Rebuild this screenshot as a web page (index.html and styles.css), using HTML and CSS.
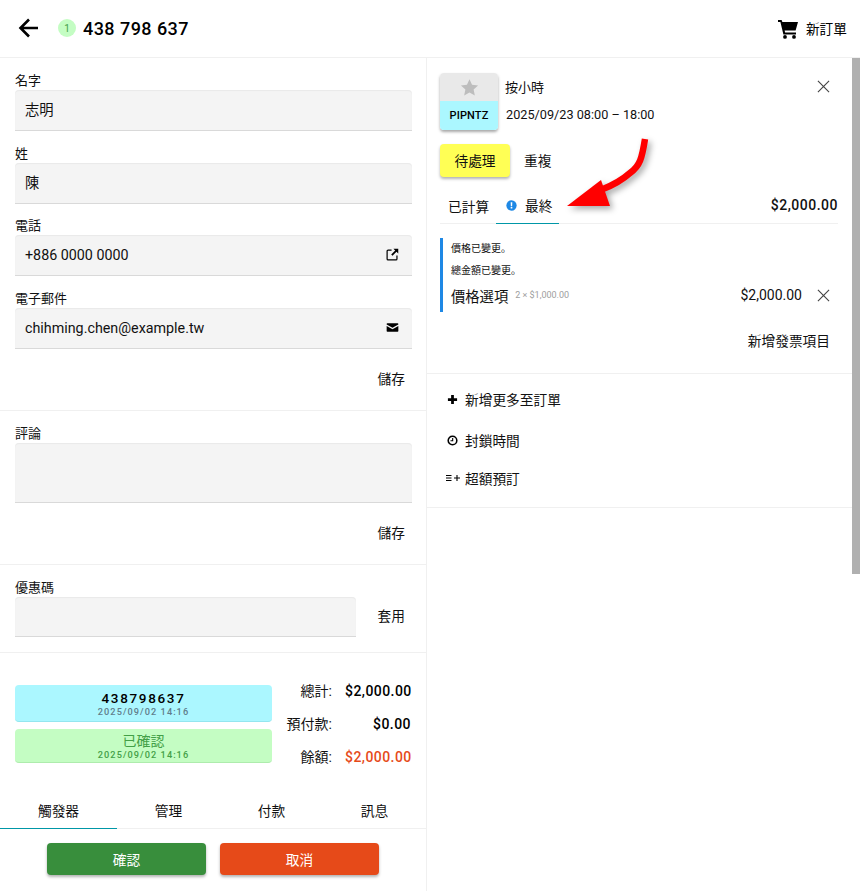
FILE: index.html
```html
<!DOCTYPE html>
<html>
<head>
<meta charset="utf-8">
<title>訂單 438 798 637</title>
<link rel="stylesheet" href="styles.css">
</head>
<body>
<div class="app">
  <header class="topbar">
    <div class="topbar-left">
      <svg class="back" viewBox="0 0 24 24"><path d="M22 12H4M13 3.500 4.500 12l8.500 8.500" fill="none" stroke="#000" stroke-width="2.600"/></svg>
      <span class="badge">1</span>
      <span class="order-no">438 798 637</span>
    </div>
    <div class="topbar-right">
      <svg class="cart" viewBox="0 0 20 20"><path d="M0 1h3.600l.8 2H20l-2.400 8.500H6.600l.5 2H18v2H5.400L2.400 3H0zM7 16a1.900 1.900 0 1 1 0 3.800A1.900 1.900 0 0 1 7 16zm9 0a1.900 1.900 0 1 1 0 3.800 1.900 1.900 0 0 1 0-3.800z"/></svg>
      <span>新訂單</span>
    </div>
  </header>
  <div class="columns">
    <main class="left">
      <section class="sec sec-contact">
        <div class="field"><label class="lbl">名字</label><div class="inp inp-cjk">志明</div></div>
        <div class="field"><label class="lbl">姓</label><div class="inp inp-cjk">陳</div></div>
        <div class="field"><label class="lbl">電話</label><div class="inp"><span>+886 0000 0000</span>
          <svg class="inp-icon" viewBox="0 0 14 14"><path d="M6 2.200H2.200a1 1 0 0 0-1 1v8.600a1 1 0 0 0 1 1h8.600a1 1 0 0 0 1-1V8" fill="none" stroke="#000" stroke-width="1.300"/><path d="M8 .8h5.200V6l-1.900-1.900L7 8.400 5.600 7l4.300-4.300z"/></svg></div></div>
        <div class="field"><label class="lbl">電子郵件</label><div class="inp"><span>chihming.chen@example.tw</span>
          <svg class="inp-icon" viewBox="0 0 14 14"><path d="M1.500 2.500h11a.8.8 0 0 1 .8.8v.5L7 7.200.7 3.800v-.5a.8.8 0 0 1 .8-.8zM.7 5.400 7 8.800l6.300-3.400v5.300a.8.8 0 0 1-.8.8h-11a.8.8 0 0 1-.8-.8z"/></svg></div></div>
        <div class="actions"><span class="text-btn">儲存</span></div>
      </section>
      <section class="sec sec-comment">
        <label class="lbl">評論</label>
        <div class="inp area"></div>
        <div class="actions"><span class="text-btn">儲存</span></div>
      </section>
      <section class="sec sec-coupon">
        <label class="lbl">優惠碼</label>
        <div class="coupon-row"><div class="inp"></div><span class="text-btn">套用</span></div>
      </section>
      <section class="summary">
        <div class="status">
          <div class="st st-ref"><div class="st-main">438798637</div><div class="st-date">2025/09/02 14:16</div></div>
          <div class="st st-ok"><div class="st-main">已確認</div><div class="st-date">2025/09/02 14:16</div></div>
        </div>
        <div class="totals">
          <div class="t-row"><span class="t-l">總計:</span><b class="t-v">$2,000.00</b></div>
          <div class="t-row"><span class="t-l">預付款:</span><b class="t-v">$0.00</b></div>
          <div class="t-row"><span class="t-l">餘額:</span><b class="t-v due">$2,000.00</b></div>
        </div>
      </section>
      <nav class="tabs">
        <span class="tab on">觸發器</span><span class="tab">管理</span><span class="tab">付款</span><span class="tab">訊息</span>
      </nav>
      <div class="buttons"><span class="btn green">確認</span><span class="btn orange">取消</span></div>
    </main>
    <aside class="right">
      <div class="rcontent">
        <section class="item">
          <div class="item-head">
            <div class="thumb">
              <div class="thumb-top"><svg viewBox="0 0 24 24"><path d="M12 2.500l2.900 6.300 6.900.8-5.100 4.700 1.400 6.800-6.100-3.400-6.100 3.400 1.400-6.800-5.100-4.700 6.900-.8z" fill="#bdbdbd"/></svg></div>
              <div class="thumb-code">PIPNTZ</div>
            </div>
            <div class="item-txt">
              <div class="item-name"><span>按小時</span><svg class="x" viewBox="0 0 14 14"><path d="M1 1l12 12M13 1 1 13" stroke="#444" stroke-width="1.200" fill="none"/></svg></div>
              <div class="item-date">2025/09/23 08:00 – 18:00</div>
            </div>
          </div>
          <div class="state-row"><span class="pending">待處理</span><span class="repeat">重複</span></div>
          <div class="itabs">
            <span class="itab">已計算</span>
            <span class="itab on"><svg class="info" viewBox="0 0 12 12"><circle cx="6" cy="6" r="5.600" fill="#1e88e5"/><path d="M5.100 2.500h1.800l-.2 4.300H5.300zM5.100 7.700h1.800v1.700H5.100z" fill="#fff"/></svg>最終</span>
            <b class="itotal">$2,000.00</b>
          </div>
          <div class="invoice">
            <p class="note">價格已變更。</p>
            <p class="note">總金額已變更。</p>
            <div class="line"><span class="line-name">價格選項</span><span class="line-qty">2 × $1,000.00</span><span class="line-amt">$2,000.00</span><svg class="x" viewBox="0 0 14 14"><path d="M1 1l12 12M13 1 1 13" stroke="#444" stroke-width="1.200" fill="none"/></svg></div>
          </div>
          <div class="add-inv">新增發票項目</div>
        </section>
        <section class="more">
          <div class="m-row"><svg class="m-ic" viewBox="0 0 12 12"><path d="M4.500 1h3v3.500H11v3H7.500V11h-3V7.500H1v-3h3.500z"/></svg>新增更多至訂單</div>
          <div class="m-row m-row-mid"><svg class="m-ic" viewBox="0 0 12 12"><circle cx="6" cy="6" r="4.700" fill="none" stroke="#000" stroke-width="1.700"/><path d="M6.200 3.400v2.800H3.800" fill="none" stroke="#000" stroke-width="1.200"/></svg>封鎖時間</div>
          <div class="m-row m-row-last"><svg class="m-ic-wide" viewBox="0 0 14 12"><path d="M0 3.500h5.500M0 6h5.500M0 8.500h5.500M8 6h6M11 3v6" fill="none" stroke="#000" stroke-width="1.100"/></svg>超額預訂</div>
        </section>
      </div>
      <div class="scrollbar"></div>
    </aside>
  </div>
  <svg class="arrow" viewBox="0 0 110 80"><path d="M84 1C81 20 79 28 69 35 60 43 52 47 42 51" fill="none" stroke="#f00" stroke-width="6.500"/><path d="M6 68 40 42 49 68z" fill="#f00"/></svg>
</div>
</body>
</html>
```
FILE: styles.css
```css
* { box-sizing: border-box; }
html, body { margin: 0; height: 100%; }
body { font-family: Roboto, "Noto Sans CJK JP", sans-serif; font-size: 13.7px; color: #000; background: #fff; overflow: hidden; }
.app { position: relative; width: 860px; height: 891px; display: flex; flex-direction: column; }

.topbar { height: 58px; flex: none; display: flex; justify-content: space-between; align-items: center; padding: 0 13px 1px 16px; border-bottom: 1px solid #f0f0f0; }
.topbar-left { display: flex; align-items: center; }
.back { width: 24px; height: 24px; margin-right: 18px; }
.badge { width: 18px; height: 18px; border-radius: 50%; background: #c4fdc3; color: #43a047; font-size: 10px; display: flex; align-items: center; justify-content: center; margin-right: 7px; }
.order-no { font-size: 18px; font-weight: 500; letter-spacing: .45px; color: #000; }
.topbar-right { display: flex; align-items: center; gap: 8px; }
.cart { width: 20px; height: 20px; margin-top: 2px; }

.columns { flex: 1; display: flex; min-height: 0; }
.left { width: 427px; flex: none; border-right: 1px solid #f0f0f0; }
.sec { padding: 0 14px 0 15px; border-bottom: 1px solid #f0f0f0; }
.lbl { display: block; font-size: 13px; line-height: 16px; color: #111; margin-bottom: 1px; }
.field { height: 72.700px; padding-top: 15px; }
.inp { height: 41px; background: #f4f4f4; border-bottom: 1px solid #d9d9d9; border-radius: 4px 4px 0 0; box-shadow: inset 0 1px 1px #e9e9e9; padding: 0 13px 1px 10px; display: flex; align-items: center; justify-content: space-between; font-size: 14.300px; color: #111; }
.inp-cjk { padding-bottom: 3px; }
.inp-icon { width: 13px; height: 13px; }
.sec-contact { height: 353px; }
.actions { display: flex; justify-content: flex-end; padding-right: 7px; }
.sec-contact .actions { margin-top: 21px; }
.text-btn { font-size: 13.700px; line-height: 18px; color: #111; }
.sec-comment { height: 154px; padding-top: 15px; }
.area { height: 60px; }
.sec-comment .actions { margin-top: 21px; }
.sec-coupon { height: 88px; padding-top: 15px; }
.coupon-row { display: flex; align-items: center; justify-content: space-between; padding-right: 7px; }
.coupon-row .inp { width: 341px; height: 40px; }
.coupon-row .text-btn { margin-top: -2px; }

.summary { display: flex; padding: 17px 14px 0 15px; height: 141px; }
.status { width: 257px; flex: none; margin-top: 15px; display: flex; flex-direction: column; gap: 7px; }
.st { border-radius: 4px; text-align: center; letter-spacing: 1.050px; }
.st-ref { height: 37px; background: #abf7ff; border-bottom: 1px solid #94e6ef; padding-top: 6px; }
.st-ok { height: 34px; background: #c4fdc3; border-bottom: 1px solid #aeecad; color: #43a047; padding-top: 3px; }
.st-main { font-size: 13.500px; line-height: 15px; font-weight: 500; letter-spacing: 1.650px; color: #000; }
.st-ok .st-main { font-size: 14px; font-weight: 400; letter-spacing: 0; color: #43a047; line-height: 18px; }
.st-date { font-size: 9.200px; line-height: 11px; font-weight: 500; color: #607d8b; }
.st-ok .st-date { color: #43a047; line-height: 10px; }
.totals { flex: 1; margin-top: 12px; }
.t-row { height: 33px; display: flex; justify-content: flex-end; align-items: flex-start; font-size: 14px; line-height: 18px; gap: 13px; }
.t-l { color: #111; }
.t-v { width: 67px; text-align: right; font-weight: 500; letter-spacing: .45px; color: #000; white-space: nowrap; padding-right: 1px; }
.t-v.due { color: #e64a19; }

.tabs { height: 35px; display: flex; border-bottom: 1px solid #f0f0f0; }
.tab { width: 103px; padding-top: 8px; text-align: center; line-height: 18px; color: #111; }
.tab.on { width: 117px; border-bottom: 1px solid #0097a7; height: 35px; }
.buttons { display: flex; justify-content: center; gap: 14px; padding: 14px 47px 0 47px; }
.btn { width: 159px; height: 32px; border-radius: 4px; color: #fff; display: flex; align-items: center; justify-content: center; box-shadow: 0 2px 3px rgba(0,0,0,.3); }
.green { background: #388e3c; }
.orange { background: #e64a19; }

.right { flex: 1; display: flex; min-width: 0; }
.rcontent { flex: 1; min-width: 0; }
.scrollbar { width: 8px; height: 516px; background: #b0b0b0; flex: none; }
.item { padding: 15px 14px 0 13px; height: 316px; border-bottom: 1px solid #f0f0f0; }
.item-head { display: flex; gap: 7px; }
.thumb { width: 58px; height: 57px; border-radius: 4px; overflow: hidden; box-shadow: 0 2px 3px rgba(0,0,0,.35); flex: none; }
.thumb-top { height: 28px; background: #e9e9e9; display: flex; align-items: center; justify-content: center; }
.thumb-top svg { width: 21px; height: 21px; }
.thumb-code { height: 29px; background: #abf7ff; font-size: 11px; font-weight: 500; letter-spacing: .15px; display: flex; align-items: center; justify-content: center; color: #000; }
.item-txt { flex: 1; }
.item-name { display: flex; justify-content: space-between; align-items: center; height: 28px; font-size: 13px; color: #111; padding-right: 8px; padding-bottom: 2px; }
.x { width: 13px; height: 13px; }
.item-date { height: 26px; line-height: 26px; font-size: 12.700px; padding-left: 1px; color: #111; padding-top: 1px; }
.state-row { display: flex; align-items: center; margin-top: 14px; }
.pending { width: 70px; height: 33px; padding-bottom: 2px; background: #ffff55; border-radius: 4px; box-shadow: 0 2px 3px rgba(0,0,0,.3); display: flex; align-items: center; justify-content: center; color: #111; }
.repeat { margin-left: 14px; margin-top: -2px; color: #111; }
.itabs { height: 40px; margin-top: 7px; display: flex; border-bottom: 1px solid #f0f0f0; color: #111; }
.itab { padding: 3px 8px 0 8px; height: 40px; display: flex; align-items: center; white-space: nowrap; }
.itab.on { margin-left: -1px; padding: 3px 0 0 10px; width: 63px; border-bottom: 1px solid #0097a7; }
.info { width: 11px; height: 11px; margin-right: 8px; flex: none; margin-top: 1px; }
.itotal { margin-left: auto; align-self: center; padding-top: 3px; font-weight: 500; font-size: 14px; letter-spacing: .5px; }
.invoice { margin-top: 14px; border-left: 3px solid #1e88e5; padding: 1px 8px 0 8px; height: 74px; }
.note { margin: 0; padding-top: 2px; font-size: 10px; line-height: 15px; height: 22px; color: #111; }
.line { display: flex; align-items: center; height: 22px; margin-top: 1px; }
.line-name { font-size: 14.300px; color: #111; }
.line-qty { font-size: 9px; color: #9e9e9e; margin-left: 7px; }
.line-amt { margin-left: auto; font-size: 14px; color: #111; margin-right: 15px; }
.add-inv { text-align: right; line-height: 18px; padding-right: 8px; margin-top: 20px; color: #111; }
.more { height: 134px; border-bottom: 1px solid #f0f0f0; padding: 5px 0 0 20px; }
.m-row { display: flex; align-items: center; height: 40px; color: #111; }
.m-row-mid { margin-top: 1px; }
.m-row-last { margin-top: -2px; margin-left: -1px; }
.m-ic { width: 11px; height: 11px; margin-right: 7px; }
.m-ic-wide { width: 14px; height: 12px; margin-right: 5px; }

.arrow { position: absolute; left: 561px; top: 138px; width: 110px; height: 80px; overflow: visible; filter: drop-shadow(3px 3px 3px rgba(0,0,0,.35)); pointer-events: none; }
```
